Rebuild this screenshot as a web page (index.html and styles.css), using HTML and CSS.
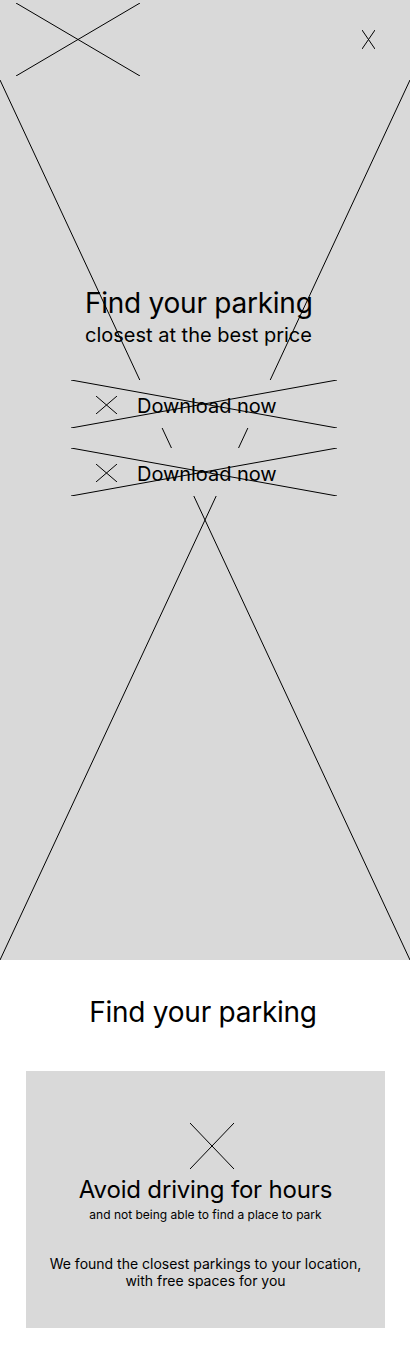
FILE: index.html
```html
<!DOCTYPE html>
<html lang="en">
<head>
    <meta charset="UTF-8">
    <meta name="viewport" content="width=device-width, initial-scale=1.0">
    <title>Find your parking</title>
    <link rel="stylesheet" href="styles.css">
</head>
<body>
    <section class="hero">
        <header class="hero-top">
            <a class="logo x-ph" href="#" aria-label="Logo"></a>
            <button class="close x-ph" aria-label="Close"></button>
        </header>
        <div class="hero-body">
            <h1 class="hero-title">Find your parking</h1>
            <p class="hero-sub">closest at the best price</p>
            <div class="downloads">
                <a class="btn-download x-ph" href="#">
                    <span class="btn-icon x-ph"></span>
                    <span class="btn-label">Download now</span>
                </a>
                <a class="btn-download x-ph" href="#">
                    <span class="btn-icon x-ph"></span>
                    <span class="btn-label">Download now</span>
                </a>
            </div>
        </div>
    </section>

    <section class="features">
        <h2 class="features-title">Find your parking</h2>
        <div class="card">
            <span class="card-icon x-ph"></span>
            <h3 class="card-title">Avoid driving for hours</h3>
            <p class="card-sub">and not being able to find a place to park</p>
            <p class="card-text">We found the closest parkings to your location,<br>with free spaces for you</p>
        </div>
    </section>
</body>
</html>
```

FILE: styles.css
```css
* {
    box-sizing: border-box;
}
body {
    margin: 0;
    width: 411px;
    background: #fff;
    color: #000;
    font-family: Inter, "Noto Sans", sans-serif;
}
/* placeholder cross, stretched to whatever box it is on */
.x-ph {
    background-image: url("data:image/svg+xml,%3Csvg xmlns='http://www.w3.org/2000/svg' viewBox='0 0 100 100' preserveAspectRatio='none'%3E%3Cpath d='M0 0L100 100M100 0L0 100' fill='none' stroke='%23000' stroke-width='1' vector-effect='non-scaling-stroke'/%3E%3C/svg%3E");
    background-repeat: no-repeat;
    background-size: 100% 100%;
}
.hero {
    width: 410px;
    height: 960px;
    background-color: #d9d9d9;
    background-image: url("data:image/svg+xml,%3Csvg xmlns='http://www.w3.org/2000/svg' viewBox='0 0 100 100' preserveAspectRatio='none'%3E%3Cpath d='M0 0L100 100M100 0L0 100' fill='none' stroke='%23000' stroke-width='1' vector-effect='non-scaling-stroke'/%3E%3C/svg%3E");
    background-repeat: no-repeat;
    background-position: left bottom;
    background-size: 410px 880px;
}
.hero-top {
    display: flex;
    justify-content: space-between;
    align-items: flex-start;
    height: 80px;
}
.logo {
    display: block;
    width: 124px;
    height: 73px;
    margin: 3px 0 0 16px;
}
.close {
    width: 13px;
    height: 19px;
    margin: 30px 35px 0 0;
    padding: 0;
    border: none;
    background-color: transparent;
    cursor: pointer;
}
.hero-body {
    padding-top: 206px;
}
.hero-title {
    margin: 0 0 0 85px;
    font-size: 28px;
    line-height: 34px;
    font-weight: 400;
    letter-spacing: -0.25px;
}
.hero-sub {
    margin: 3px 0 0 85px;
    font-size: 20px;
    line-height: 24px;
}
.downloads {
    display: flex;
    flex-direction: column;
    gap: 20px;
    width: 266px;
    margin: 33px 0 0 71px;
}
.btn-download {
    display: flex;
    align-items: center;
    height: 48px;
    background-color: #d9d9d9;
    color: #000;
    text-decoration: none;
    font-size: 20px;
    line-height: 24px;
}
.btn-icon {
    flex: none;
    width: 21px;
    height: 18px;
    margin: 1px 20px 0 25px;
}
.btn-label {
    padding-top: 3px;
    letter-spacing: -0.05px;
}
.features {
    padding: 35px 0 22px;
}
.features-title {
    margin: 0;
    padding-right: 5px;
    text-align: center;
    font-size: 28px;
    line-height: 34px;
    font-weight: 400;
    letter-spacing: -0.25px;
}
.card {
    margin: 42px 26px 0;
    padding: 52px 0 39px;
    background: #d9d9d9;
    text-align: center;
}
.card-icon {
    display: block;
    width: 44px;
    height: 46px;
    margin-left: 164px;
}
.card-title {
    margin: 6px 0 0;
    font-size: 24px;
    line-height: 29px;
    font-weight: 400;
    letter-spacing: -0.17px;
}
.card-sub {
    margin: 3px 0 0;
    font-size: 12px;
    line-height: 16px;
}
.card-text {
    margin: 32px 0 0;
    font-size: 14px;
    line-height: 17px;
}
```
